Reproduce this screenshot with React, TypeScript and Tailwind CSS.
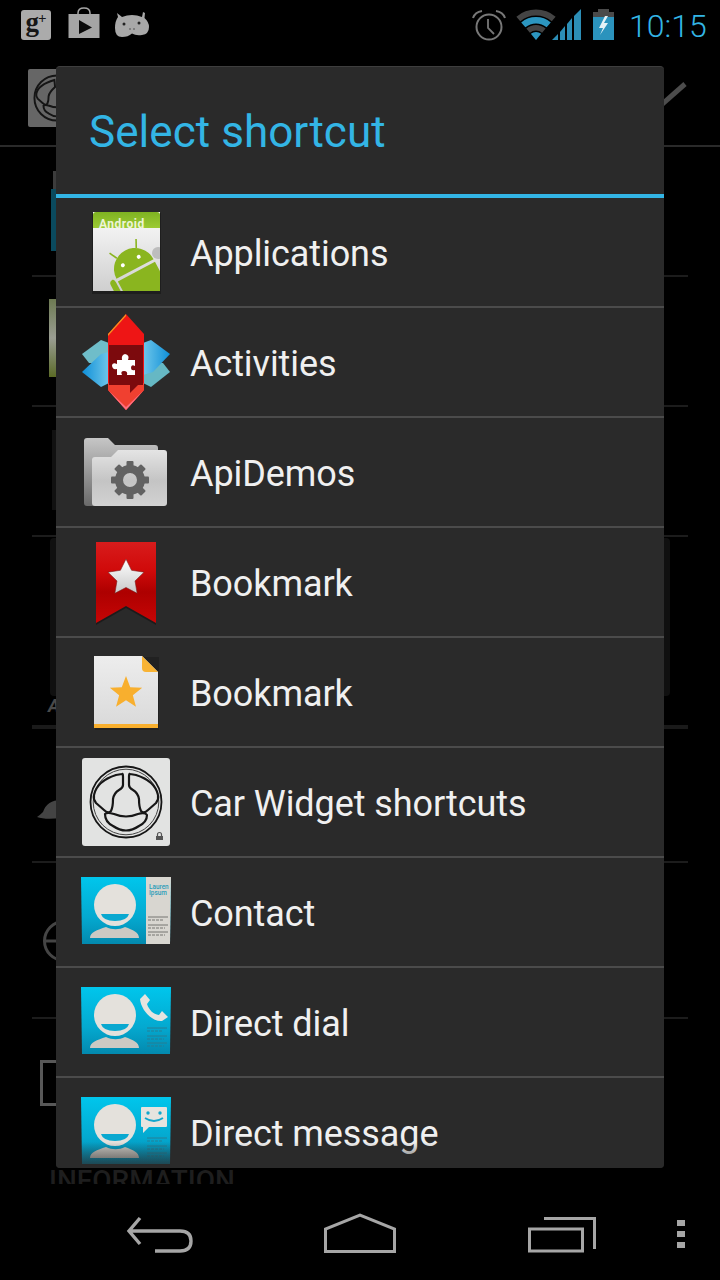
import React from "react";

function star(cx: number, cy: number, R: number, r: number) {
  const pts: string[] = [];
  for (let i = 0; i < 10; i++) {
    const a = -Math.PI / 2 + (i * Math.PI) / 5;
    const d = i % 2 === 0 ? R : r;
    pts.push(`${(cx + d * Math.cos(a)).toFixed(2)},${(cy + d * Math.sin(a)).toFixed(2)}`);
  }
  return pts.join(" ");
}

function sector(cx: number, cy: number, r0: number, r1: number, half: number) {
  const a = (half * Math.PI) / 180;
  const p = (r: number, s: number) => `${(cx + s * r * Math.sin(a)).toFixed(2)} ${(cy - r * Math.cos(a)).toFixed(2)}`;
  return `M${p(r0, -1)} A${r0} ${r0} 0 0 1 ${p(r0, 1)} L${p(r1, 1)} A${r1} ${r1} 0 0 0 ${p(r1, -1)} Z`;
}

const IconSvg = ({ children }: { children: React.ReactNode }) => (
  <svg width="90" height="90" viewBox="0 0 90 90" className="shrink-0 overflow-visible">
    {children}
  </svg>
);

const AndroidIcon = () => (
  <IconSvg>
    <defs>
      <linearGradient id="apBody" x1="0" y1="0" x2="0" y2="1">
        <stop offset="0" stopColor="#fbfbfb" />
        <stop offset="1" stopColor="#cfcfcf" />
      </linearGradient>
      <linearGradient id="apTop" x1="0" y1="0" x2="0" y2="1">
        <stop offset="0" stopColor="#7fb322" />
        <stop offset="1" stopColor="#9ccb34" />
      </linearGradient>
      <clipPath id="apClip">
        <rect x="12" y="5" width="67" height="79" />
      </clipPath>
    </defs>
    <rect x="11" y="6" width="69" height="81" fill="#111" opacity="0.5" />
    <g clipPath="url(#apClip)">
      <rect x="12" y="5" width="67" height="79" fill="url(#apBody)" />
      <path d="M12 8 Q12 5 15 5 H76 Q79 5 79 8 V21 H12 Z" fill="url(#apTop)" />
      <text x="18" y="20.5" fontFamily="Roboto, sans-serif" fontWeight="700" fontSize="12" letterSpacing="0.5" fill="#eef5d8">Android</text>
      <g transform="translate(-3 0) rotate(-28 57 62)">
        <path d="M36 62 A21 21 0 0 1 78 62 Z" fill="#8ab51f" />
        <path d="M36 65 H78 V100 H36 Z" fill="#8ab51f" />
        <path d="M28 65 Q28 61 32 61 Q34 61 34 65 V86 Q34 89 31 89 Q28 89 28 86 Z" fill="#8ab51f" />
        <line x1="46" y1="44" x2="42" y2="36" stroke="#8ab51f" strokeWidth="1.6" />
        <line x1="68" y1="44" x2="72" y2="36" stroke="#8ab51f" strokeWidth="1.6" />
        <circle cx="48" cy="53" r="2" fill="#fff" />
        <circle cx="66" cy="53" r="2" fill="#fff" />
      </g>
      <circle cx="77" cy="46" r="6" fill="#bdbdbd" />
    </g>
  </IconSvg>
);

const NovaIcon = () => (
  <IconSvg>
    <defs>
      <linearGradient id="novaWing" x1="0" y1="0" x2="1" y2="0">
        <stop offset="0" stopColor="#0f8fd8" />
        <stop offset="1" stopColor="#6fc7ea" />
      </linearGradient>
      <linearGradient id="novaWingR" x1="1" y1="0" x2="0" y2="0">
        <stop offset="0" stopColor="#0f8fd8" />
        <stop offset="1" stopColor="#6fc7ea" />
      </linearGradient>
    </defs>
    <path d="M1 37 L20 23 L28 26 V46 L8 46 Z" fill="#6fbdc9" />
    <path d="M1 55 L20 37 L28 35 V66 L20 70 Z" fill="url(#novaWing)" />
    <path d="M89 55 L82 46 L62 46 V66 L70 70 Z" fill="#66b8c4" />
    <path d="M89 37 L70 23 L62 26 V58 L72 55 Z" fill="url(#novaWingR)" />
    <path d="M45 -3 L63 17 V73 L45 93 L27 73 V17 Z" fill="#ee1515" />
    <path d="M27 66 H63 V73 L45 93 L27 73 Z" fill="#f04030" />
    <path d="M45 -3 L27 17 V19 L45 -1 Z" fill="#f5921e" />
    <path d="M27 73 L45 93 L63 73 L45 90 Z" fill="#ff6f80" />
    <path d="M28 28 H62 V68 H57 L49 76 V68 H28 Z" fill="#7c0a0d" />
    <path d="M36 43 H41 Q40 38 44 37 Q49 38 47 43 H54 V49 Q50 47 50 51 Q50 54 54 53 V58 H46 Q47 54 43 54 Q39 54 41 58 H36 V52 Q31 53 31 48 Q32 45 36 47 Z" fill="#fff" />
  </IconSvg>
);

const FolderIcon = () => {
  const teeth = [0, 45, 90, 135, 180, 225, 270, 315];
  return (
    <IconSvg>
      <defs>
        <linearGradient id="fBack" x1="0" y1="0" x2="0" y2="1">
          <stop offset="0" stopColor="#c6c6c6" />
          <stop offset="1" stopColor="#6a6a6a" />
        </linearGradient>
        <linearGradient id="fFront" x1="0" y1="0" x2="0" y2="1">
          <stop offset="0" stopColor="#e4e4e4" />
          <stop offset="0.55" stopColor="#c4c4c4" />
          <stop offset="1" stopColor="#d2d2d2" />
        </linearGradient>
      </defs>
      <path d="M3 14 Q3 11 6 11 H27 L34 18 H74 Q77 18 77 21 V79 H6 Q3 79 3 76 Z" fill="url(#fBack)" />
      <path d="M11 33 Q11 30 14 30 H30 L37 23 H83 Q86 23 86 26 V76 Q86 79 83 79 H14 Q11 79 11 76 Z" fill="url(#fFront)" />
      <g fill="#626262">
        <circle cx="49" cy="53" r="11" fill="none" stroke="#626262" strokeWidth="8" />
        {teeth.map((t) => (
          <rect key={t} x="45.5" y="34" width="7" height="7" rx="1" transform={`rotate(${t} 49 53)`} />
        ))}
      </g>
    </IconSvg>
  );
};

const RedBookmark = () => (
  <IconSvg>
    <defs>
      <linearGradient id="bmRed" x1="0" y1="0" x2="0" y2="1">
        <stop offset="0" stopColor="#d81c1c" />
        <stop offset="0.35" stopColor="#d00a0a" />
        <stop offset="0.62" stopColor="#ad0000" />
        <stop offset="1" stopColor="#c70505" />
      </linearGradient>
      <linearGradient id="bmStar" x1="0" y1="0" x2="0" y2="1">
        <stop offset="0" stopColor="#ffffff" />
        <stop offset="1" stopColor="#c8c8c8" />
      </linearGradient>
    </defs>
    <path d="M15 6 H75 V88 L45 71 L15 88 Z" fill="#000" opacity="0.35" />
    <path d="M15 5 H75 V86 L45 69 L15 86 Z" fill="url(#bmRed)" />
    <polygon points={star(45, 41, 19, 9.5)} fill="url(#bmStar)" stroke="#7d1b1b" strokeWidth="0.6" />
  </IconSvg>
);

const DocBookmark = () => (
  <IconSvg>
    <defs>
      <linearGradient id="docBody" x1="0" y1="0" x2="0" y2="1">
        <stop offset="0" stopColor="#ededed" />
        <stop offset="1" stopColor="#d9d9d9" />
      </linearGradient>
    </defs>
    <path d="M14 10 H78 V83 H14 Z" fill="#000" opacity="0.2" />
    <path d="M13 9 H61 L77 25 V81 H13 Z" fill="url(#docBody)" />
    <rect x="13" y="77" width="64" height="4" fill="#f8af2e" />
    <path d="M61 9 L77 25 H65 Q61 25 61 21 Z" fill="#f8b334" />
    <polygon points={star(45, 46, 17, 7.2)} fill="#f8af2e" />
  </IconSvg>
);

const Wheel = () => (
  <svg width="90" height="90" viewBox="0 0 90 90" className="shrink-0">
    <rect x="1" y="1" width="88" height="88" rx="3" fill="#e2e3e2" />
    <circle cx="45" cy="45" r="35.5" fill="none" stroke="#161616" strokeWidth="1.8" />
    <circle cx="45" cy="45" r="32.8" fill="none" stroke="#444" strokeWidth="1" />
    <path d="M41 17 Q42 16 42 20 V28 Q42 31 38 33 Q33 36 32 42 Q32 50 30 54 Q27 57 23 53 L15 46 Q12 42 13 38 Q16 24 35 18 Z" fill="none" stroke="#161616" strokeWidth="2.2" strokeLinejoin="round" />
    <path d="M49 17 Q48 16 48 20 V28 Q48 31 52 33 Q57 36 58 42 Q58 50 60 54 Q63 57 67 53 L75 46 Q78 42 77 38 Q74 24 55 18 Z" fill="none" stroke="#161616" strokeWidth="2.2" strokeLinejoin="round" />
    <path d="M24 57 Q26 55 33 57 Q45 62 57 57 Q64 55 66 58 Q66 65 58 69 Q45 78 32 69 Q24 65 24 57 Z" fill="none" stroke="#161616" strokeWidth="2.2" strokeLinejoin="round" />
    <rect x="75" y="79" width="7" height="4" fill="#555" />
    <path d="M76.5 79 V77.5 A2 2 0 0 1 80.5 77.5 V79" fill="none" stroke="#555" strokeWidth="1.2" />
  </svg>
);

const Person = () => (
  <>
    <path d="M9 71 C9 65 16 63 25 60 C31 63 38 63 44 60 C52 63 58 65 58 71 Z" fill="#ccc9c3" />
    <circle cx="34" cy="38" r="21" fill="#e4e1dc" />
    <path d="M20 47 H48 Q46 54 34 54 Q22 54 20 47 Z" fill="#0aa8d0" />
  </>
);

const TinyLines = ({ x, y, c }: { x: number; y: number; c: string }) => (
  <g stroke={c} strokeWidth="0.9">
    <line x1={x} y1={y} x2={x + 20} y2={y} />
    <line x1={x} y1={y + 3} x2={x + 16} y2={y + 3} strokeDasharray="3 1" />
    <line x1={x} y1={y + 8} x2={x + 20} y2={y + 8} />
    <line x1={x} y1={y + 11} x2={x + 17} y2={y + 11} strokeDasharray="3 1" />
    <line x1={x} y1={y + 15} x2={x + 20} y2={y + 15} />
    <line x1={x} y1={y + 18} x2={x + 17} y2={y + 18} strokeDasharray="3 1" />
  </g>
);

const CardBg = ({ id }: { id: string }) => (
  <>
    <defs>
      <linearGradient id={id} x1="0" y1="0" x2="0" y2="1">
        <stop offset="0" stopColor="#00c6ec" />
        <stop offset="0.6" stopColor="#04a9d0" />
        <stop offset="1" stopColor="#0389ae" />
      </linearGradient>
    </defs>
    <path d="M0 10 H90 L89 77 H1 Z" fill={`url(#${id})`} />
  </>
);

const ContactIcon = () => (
  <IconSvg>
    <CardBg id="cardA" />
    <path d="M65 10 H90 L89 77 H65 Z" fill="#d8d6d0" />
    <text x="68" y="21.5" fontFamily="Roboto, sans-serif" fontWeight="500" fontSize="6.4" fill="#2a9dba">Lauren</text>
    <text x="68" y="27.5" fontFamily="Roboto, sans-serif" fontWeight="500" fontSize="6.4" fill="#2a9dba">Ipsum</text>
    <TinyLines x={67} y={50} c="#6c6c68" />
    <Person />
  </IconSvg>
);

const DialIcon = () => (
  <IconSvg>
    <CardBg id="cardB" />
    <Person />
    <path d="M64 17 L69 23 L66 27 C68 33 72 37 78 38 L81 34 L87 40 L81 44 C71 45 60 33 59 22 Z" fill="#e6e4df" />
    <TinyLines x={66} y={51} c="#2b7a90" />
  </IconSvg>
);

const MessageIcon = () => (
  <IconSvg>
    <CardBg id="cardC" />
    <Person />
    <path d="M61 20 H85 Q86 20 86 21 V39 Q86 40 85 40 H68 L62 46 V40 H61 Q60 40 60 39 V21 Q60 20 61 20 Z" fill="#e6e4df" />
    <circle cx="67" cy="26" r="1.7" fill="#12a7cd" />
    <circle cx="79" cy="26" r="1.7" fill="#12a7cd" />
    <path d="M64 31 Q73 37 82 31" fill="none" stroke="#12a7cd" strokeWidth="1.8" />
    <TinyLines x={66} y={51} c="#2b7a90" />
  </IconSvg>
);

const items: { label: string; icon: React.ReactNode }[] = [
  { label: "Applications", icon: <AndroidIcon /> },
  { label: "Activities", icon: <NovaIcon /> },
  { label: "ApiDemos", icon: <FolderIcon /> },
  { label: "Bookmark", icon: <RedBookmark /> },
  { label: "Bookmark", icon: <DocBookmark /> },
  { label: "Car Widget shortcuts", icon: <Wheel /> },
  { label: "Contact", icon: <ContactIcon /> },
  { label: "Direct dial", icon: <DialIcon /> },
  { label: "Direct message", icon: <MessageIcon /> },
];

const StatusBar = () => (
  <div className="flex h-[50px] shrink-0 items-start">
    <div className="ml-[21px] mt-[10px] flex h-[30px] w-[30px] items-center justify-center rounded-[3px] bg-[#ababab] font-['Liberation_Serif',serif] text-[27px] font-bold leading-none text-[#161616]">
      <span className="-mt-[5px]">g</span>
      <span className="-ml-[1px] -mt-[13px] text-[15px]">+</span>
    </div>
    <svg width="32" height="32" viewBox="0 0 32 32" className="ml-[17px] mt-[7px]">
      <path d="M10 10 V6 Q10 1 16 1 Q22 1 22 6 V10" fill="none" stroke="#a5a5a5" strokeWidth="1.5" />
      <path d="M0.5 7 H31.5 V31 H0.5 Z" fill="#a5a5a5" />
      <path d="M11 13 L24 20.5 L11 27 Z" fill="#0a0a0a" />
    </svg>
    <svg width="34" height="26" viewBox="0 0 34 26" className="ml-[15px] mt-[12px]">
      <path d="M3 5 L2 1 L7 5 Q17 1 27 5 L28 0 L30 1 L29.5 6 Q34 10 34 15 Q34 22 27 23 Q21 24 17 21.5 Q13 25 7 25 Q0 25 0 16 Q0 9 3 5 Z" fill="#a8a8a8" />
      <circle cx="9" cy="12" r="1.5" fill="#222" />
      <circle cx="24" cy="11" r="1.5" fill="#222" />
      <circle cx="15" cy="17" r="0.7" fill="#333" />
      <circle cx="19" cy="17" r="0.7" fill="#333" />
    </svg>
    <svg width="34" height="32" viewBox="0 0 34 32" className="ml-[323px] mt-[9px]">
      <circle cx="17" cy="18" r="12.5" fill="none" stroke="#787878" strokeWidth="2" />
      <path d="M16 10 V19 L22 25" fill="none" stroke="#787878" strokeWidth="1.8" />
      <path d="M1 9 Q3 3 10 2" fill="none" stroke="#787878" strokeWidth="2" />
      <path d="M33 9 Q31 3 24 2" fill="none" stroke="#787878" strokeWidth="2" />
    </svg>
    <svg width="66" height="32" viewBox="0 0 66 32" className="ml-[10px] mt-[9px]">
      <path d={sector(20, 31, 24.5, 30.5, 40)} fill="#444" />
      <path d={sector(20, 31, 16.5, 23, 40)} fill="#2c96c0" />
      <path d={sector(20, 31, 9.5, 15, 40)} fill="#444" />
      <path d={sector(20, 31, 0.1, 8, 40)} fill="#2c96c0" />
      <g fill="#2c8eb6">
        <path d="M36 31 L42 25 V31 Z" />
        <path d="M44 23 L49 17 V31 H44 Z" />
        <path d="M51 15 L56 9 V31 H51 Z" />
        <path d="M58 7 L65 0 V31 H58 Z" />
      </g>
    </svg>
    <svg width="21" height="32" viewBox="0 0 21 32" className="ml-[11px] mt-[9px]">
      <rect x="5" y="0" width="11" height="4" fill="#4a4a4a" />
      <rect x="0" y="3" width="21" height="8" fill="#4a4a4a" />
      <rect x="0" y="8" width="21" height="23" fill="#2b93bd" />
      <path d="M12 7 L6 19 H10 L7 26 L15 14 H11 L15 7 Z" fill="#e4f1f6" />
    </svg>
    <span className="ml-[15px] mt-[8px] text-[32px] font-light leading-[36px] text-[#33b5e5]">10:15</span>
  </div>
);

const ActionBar = () => (
  <div className="flex h-[97px] shrink-0 items-start justify-between border-b-2 border-[#2a2a2a]">
    <div className="ml-[28px] mt-[19px] h-[58px] w-[58px] overflow-hidden rounded-[2px] bg-[#666]">
      <svg width="58" height="58" viewBox="0 0 90 90">
        <circle cx="45" cy="45" r="35" fill="none" stroke="#151515" strokeWidth="3" />
        <path d="M41 17 Q16 24 13 38 Q12 42 15 46 L23 53 Q27 57 30 54 Q32 50 32 42 Q33 36 42 28 Z" fill="none" stroke="#151515" strokeWidth="3" />
        <path d="M24 57 Q26 55 33 57 Q45 62 57 57 Q64 55 66 58 Q66 65 58 69 Q45 78 32 69 Q24 65 24 57 Z" fill="none" stroke="#151515" strokeWidth="3" />
      </svg>
    </div>
    <svg width="30" height="30" viewBox="0 0 30 30" className="mr-[30px] mt-[30px]">
      <line x1="0" y1="26" x2="25" y2="4" stroke="#4c4c4c" strokeWidth="5" />
    </svg>
  </div>
);

const Background = () => (
  <div className="mx-[32px] flex min-h-0 flex-1 flex-col overflow-hidden">
    <div className="flex h-[130px] shrink-0 items-start border-b-2 border-[#1c1c1c]">
      <div className="ml-[19px] mt-[24px] flex h-[80px] w-[20px] flex-col">
        <div className="ml-[2px] h-[18px] bg-[#3c3c3c]" />
        <div className="flex-1 bg-[#0a4a5e]" />
      </div>
    </div>
    <div className="flex h-[130px] shrink-0 items-start border-b-2 border-[#1c1c1c]">
      <div className="ml-[17px] mt-[22px] h-[78px] w-[20px] bg-gradient-to-b from-[#6d7a52] via-[#9a9d92] to-[#5c6b25]" />
    </div>
    <div className="flex h-[130px] shrink-0 items-start border-b-2 border-[#1c1c1c]">
      <div className="ml-[20px] mt-[23px] h-[80px] w-[20px] bg-[#111]" />
    </div>
    <div className="flex h-[192px] shrink-0 flex-col border-b-4 border-[#1a1a1a]">
      <div className="ml-[18px] mt-[1px] h-[158px] w-[620px] rounded-[4px] bg-[#101010]" />
      <span className="ml-[16px] text-[18px] font-bold italic leading-[20px] text-[#4a4a4a]">A</span>
    </div>
    <div className="flex h-[134px] shrink-0 items-start border-b-2 border-[#1c1c1c]">
      <svg width="24" height="22" viewBox="0 0 24 22" className="ml-[5px] mt-[70px]">
        <path d="M0 18 Q3 16 6 13 Q10 1 24 1 V19 Q8 21 0 18 Z" fill="#444" />
      </svg>
    </div>
    <div className="flex h-[156px] shrink-0 items-start border-b-2 border-[#1c1c1c]">
      <svg width="44" height="44" viewBox="0 0 44 44" className="ml-[10px] mt-[56px]">
        <circle cx="22" cy="22" r="19.5" fill="none" stroke="#454545" strokeWidth="3" />
        <path d="M4 22 H40 M22 22 V42" stroke="#454545" strokeWidth="3" />
      </svg>
    </div>
    <div className="shrink-0">
      <div className="ml-[8px] mt-[41px] h-[46px] w-[40px] border-[3px] border-[#585858]" />
      <div className="ml-[17px] mt-[60px] whitespace-nowrap text-[28px] font-medium leading-[30px] text-[#1e1e1e]">INFORMATION</div>
    </div>
  </div>
);

const NavBar = () => (
  <div className="relative flex h-[96px] shrink-0 items-start bg-black">
    <svg width="68" height="38" viewBox="0 0 68 38" className="ml-[126px] mt-[32px]">
      <path d="M14 2 L3 15 L14 28 M3 15 H54 Q65 15 65 25 Q65 35 54 35 H29" fill="none" stroke="#a6a6a6" strokeWidth="3.4" />
    </svg>
    <svg width="72" height="40" viewBox="0 0 72 40" className="ml-[130px] mt-[29px]">
      <path d="M1.5 38.5 V16 L36 2 L70.5 16 V38.5 Z" fill="none" stroke="#a6a6a6" strokeWidth="3" />
    </svg>
    <svg width="68" height="36" viewBox="0 0 68 36" className="ml-[132px] mt-[33px]">
      <rect x="1.5" y="12" width="53" height="22" fill="none" stroke="#a6a6a6" strokeWidth="3" />
      <path d="M16 1.5 H66.5 V32" fill="none" stroke="#a6a6a6" strokeWidth="3" />
    </svg>
    <div className="ml-[81px] mt-[36px] flex flex-col gap-[5px]">
      <div className="h-[6px] w-[8px] bg-[#a6a6a6]" />
      <div className="h-[6px] w-[8px] bg-[#a6a6a6]" />
      <div className="h-[6px] w-[8px] bg-[#a6a6a6]" />
    </div>
  </div>
);

const Dialog = () => (
  <div className="absolute left-[56px] top-[66px] flex h-[1102px] w-[608px] flex-col overflow-hidden rounded-[4px] border-t border-[#3e3e3e] bg-[#2a2a2a]">
    <div className="flex h-[127px] shrink-0 items-center pl-[33px] text-[44px] leading-none tracking-[0.05px] text-[#33b5e5]">
      <span className="mt-[2px]">Select shortcut</span>
    </div>
    <div className="h-[4px] shrink-0 bg-[#33b5e5]" />
    <div className="relative flex min-h-0 flex-1 flex-col overflow-hidden">
      {items.map((it, i) => (
        <div key={i} className="flex h-[110px] shrink-0 items-center border-b-2 border-[#4b4b4b] pl-[25px]">
          {it.icon}
          <span className="ml-[19px] mt-[4px] whitespace-nowrap text-[36px] leading-none tracking-[-0.08px] text-[#f0f0f0]">{it.label}</span>
        </div>
      ))}
      <div className="absolute inset-x-0 bottom-0 h-[26px] bg-gradient-to-b from-transparent to-[#2a2a2a]/80" />
    </div>
  </div>
);

export default function App() {
  return (
    <div className="relative flex h-[1280px] w-[720px] flex-col overflow-hidden bg-black font-[Roboto,sans-serif]">
      <StatusBar />
      <ActionBar />
      <Background />
      <NavBar />
      <Dialog />
    </div>
  );
}
